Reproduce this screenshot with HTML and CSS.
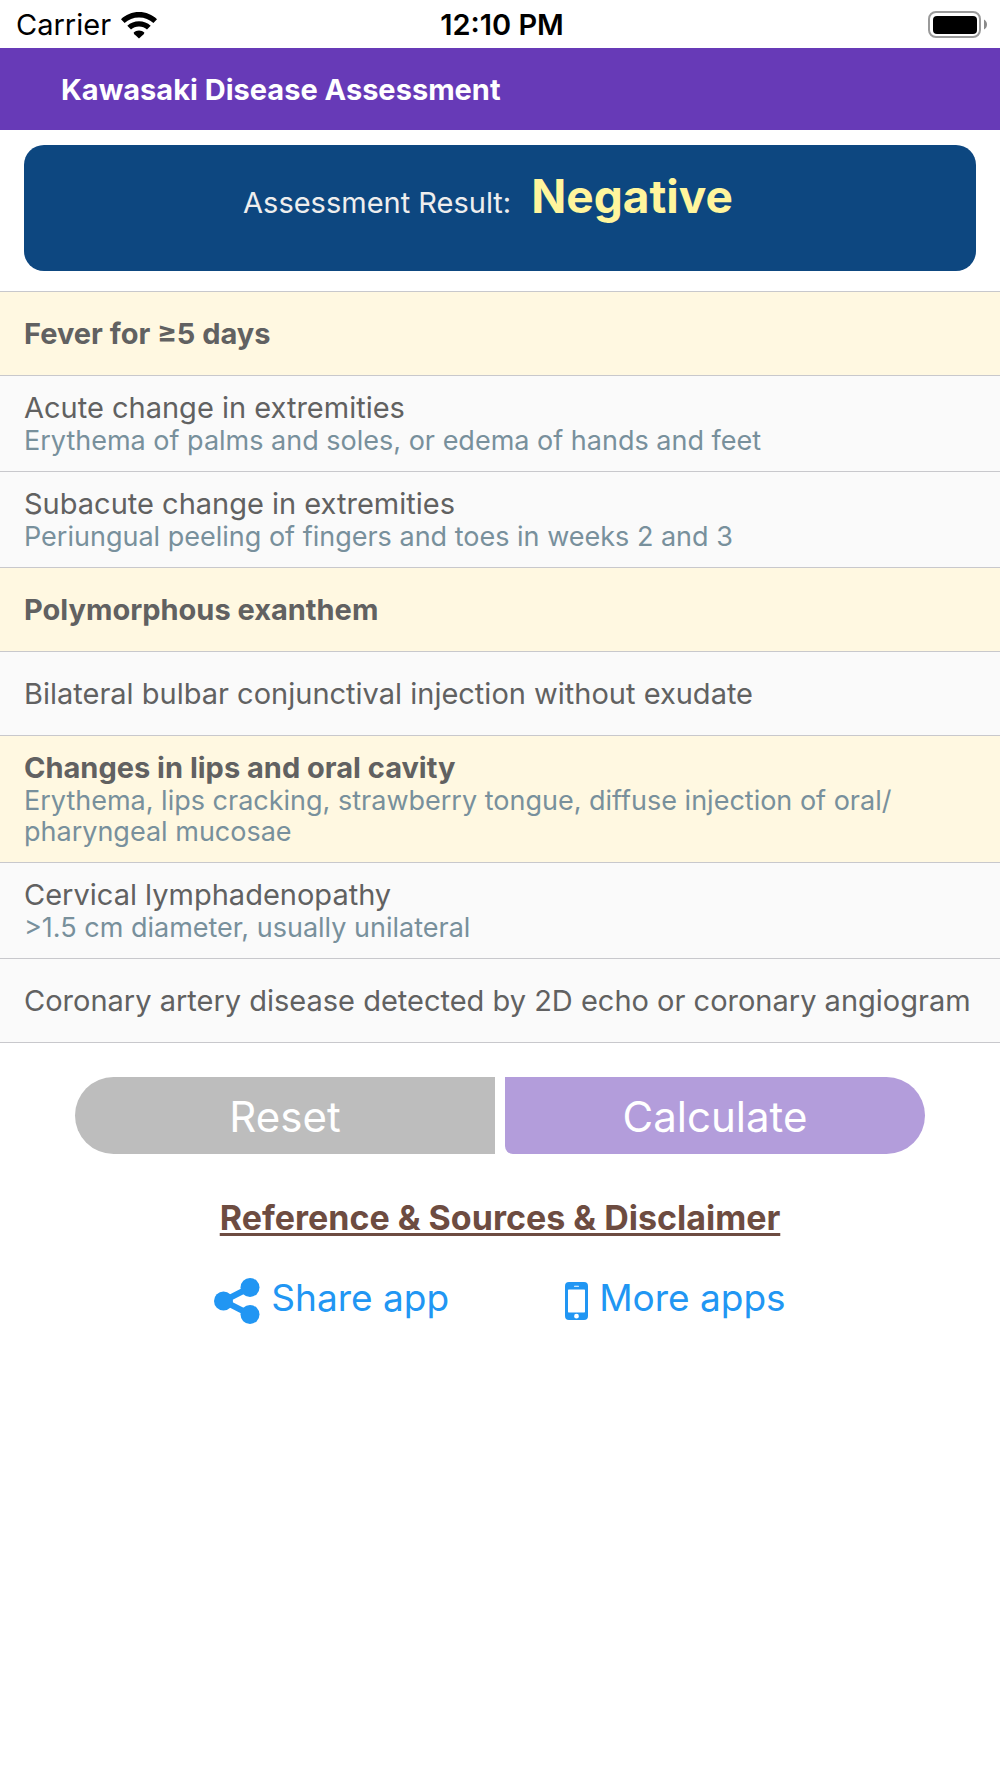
FILE: index.html
```html
<!DOCTYPE html>
<html lang="en">
<head>
<meta charset="utf-8">
<meta name="viewport" content="width=device-width, initial-scale=1">
<title>Kawasaki Disease Assessment</title>
<link rel="stylesheet" href="styles.css">
</head>
<body>
<div class="status-bar">
  <div class="carrier">
    <span>Carrier</span>
    <svg class="wifi" viewBox="0 0 36 27" aria-hidden="true">
      <path d="M18 0C11 0 4.700 2.700 0 7.200L3.600 11C7.400 7.500 12.400 5.500 18 5.500S28.600 7.500 32.400 11L36 7.200C31.300 2.700 25 0 18 0Z"/>
      <path d="M18 9.200C13.500 9.200 9.400 10.900 6.300 13.700L10 17.500C12.100 15.600 14.900 14.500 18 14.500S23.900 15.600 26 17.500L29.700 13.700C26.600 10.900 22.500 9.200 18 9.200Z"/>
      <path d="M18 18.400C15.900 18.400 14 19.200 12.700 20.500Q12.700 21.500 13.400 22.200L18 26.500L22.600 22.200Q23.300 21.500 23.300 20.500C22 19.200 20.100 18.400 18 18.400Z"/>
    </svg>
  </div>
  <time class="clock">12:10 PM</time>
  <svg class="battery" viewBox="0 0 60 28" role="img" aria-label="Battery full">
    <rect x="1" y="1" width="51" height="25" rx="7" fill="none" stroke="#9a9a9a" stroke-width="2"/>
    <rect x="5" y="5" width="44" height="18" rx="4"/>
    <path d="M56 8.500C60 10.500 60 16.500 56 18.500Z" fill="#8a8a8a"/>
  </svg>
</div>
<header class="app-bar"><h1>Kawasaki Disease Assessment</h1></header>
<main>
  <section class="result" aria-live="polite">
    <span class="result-label">Assessment Result:</span>
    <strong class="result-value">Negative</strong>
  </section>
  <ul class="criteria">
    <li><button class="criterion" type="button" aria-pressed="true"><span class="name">Fever for ≥5 days</span></button></li>
    <li><button class="criterion" type="button" aria-pressed="false"><span class="name">Acute change in extremities</span><span class="detail">Erythema of palms and soles, or edema of hands and feet</span></button></li>
    <li><button class="criterion" type="button" aria-pressed="false"><span class="name">Subacute change in extremities</span><span class="detail">Periungual peeling of fingers and toes in weeks 2 and 3</span></button></li>
    <li><button class="criterion" type="button" aria-pressed="true"><span class="name">Polymorphous exanthem</span></button></li>
    <li><button class="criterion" type="button" aria-pressed="false"><span class="name">Bilateral bulbar conjunctival injection without exudate</span></button></li>
    <li><button class="criterion" type="button" aria-pressed="true"><span class="name">Changes in lips and oral cavity</span><span class="detail">Erythema, lips cracking, strawberry tongue, diffuse injection of oral/<wbr>pharyngeal mucosae</span></button></li>
    <li><button class="criterion" type="button" aria-pressed="false"><span class="name">Cervical lymphadenopathy</span><span class="detail">&gt;1.5 cm diameter, usually unilateral</span></button></li>
    <li><button class="criterion" type="button" aria-pressed="false"><span class="name">Coronary artery disease detected by 2D echo or coronary angiogram</span></button></li>
  </ul>
  <div class="actions">
    <button class="action reset" type="button">Reset</button>
    <button class="action calculate" type="button">Calculate</button>
  </div>
  <a class="reference" href="#reference">Reference &amp; Sources &amp; Disclaimer</a>
  <nav class="app-links">
    <a href="#share">
      <svg class="share-icon" viewBox="0 0 46 46" aria-hidden="true">
        <path d="M36 9.500L9.500 23L36 36.500" fill="none" stroke="currentColor" stroke-width="6"/>
        <circle cx="9.500" cy="23" r="9.500"/><circle cx="36" cy="9.500" r="9.500"/><circle cx="36" cy="36.500" r="9.500"/>
      </svg>
      <span>Share app</span>
    </a>
    <a href="#more">
      <svg class="phone-icon" viewBox="0 0 23 38" aria-hidden="true">
        <path fill-rule="evenodd" d="M4 0H19Q23 0 23 4V34Q23 38 19 38H4Q0 38 0 34V4Q0 0 4 0ZM3.700 7.500Q3 7.500 3 8.200V29.800Q3 30.500 3.700 30.500H19.300Q20 30.500 20 29.800V8.200Q20 7.500 19.300 7.500ZM9.500 3.700Q9 3.700 9 4.200T9.500 4.700H13.500Q14 4.700 14 4.200T13.500 3.700ZM11.500 31.800A2.400 2.400 0 1 0 11.500 36.600A2.400 2.400 0 1 0 11.500 31.800Z"/>
      </svg>
      <span>More apps</span>
    </a>
  </nav>
</main>
</body>
</html>
```
FILE: styles.css
```css
* {
  box-sizing: border-box;
}

body {
  margin: 0;
  background: #fff;
  color: #616161;
  font-family: Inter, "Liberation Sans", sans-serif;
  font-size: 29px;
  line-height: 34px;
}

button {
  border: 0;
  font: inherit;
  cursor: pointer;
}

.status-bar {
  display: grid;
  grid-template-columns: 1fr auto 1fr;
  align-items: center;
  height: 48px;
  padding: 2px 12px 0 16px;
  color: #000;
}

.carrier {
  display: flex;
  align-items: center;
  gap: 10px;
}

.wifi {
  width: 36px;
  height: 27px;
}

.clock {
  font-weight: 600;
}

.battery {
  width: 60px;
  height: 28px;
  justify-self: end;
}

.app-bar {
  padding: 25px 61px 23px;
  background: #673ab7;
  color: #fff;
}

h1 {
  margin: 0;
  font-size: 29px;
  font-weight: 700;
  line-height: 34px;
}

.result {
  display: flex;
  align-items: baseline;
  justify-content: center;
  gap: 20px;
  margin: 15px 24px 20px;
  padding: 22px 24px 46px 0;
  border-radius: 20px;
  background: #0d4780;
  color: #eee;
}

.result-value {
  color: #fff59d;
  font-size: 46px;
  font-weight: 700;
  line-height: 58px;
}

.criteria {
  margin: 0;
  padding: 0;
  border-top: 1px solid #c8c8cc;
  list-style: none;
}

.criterion {
  display: flex;
  flex-direction: column;
  justify-content: center;
  width: 100%;
  min-height: 84px;
  padding: 15px 24px;
  border-bottom: 1px solid #c8c8cc;
  background: #fafafa;
  color: #616161;
  text-align: left;
}

.criterion[aria-pressed="true"] {
  background: #fff8e1;
}

.criterion[aria-pressed="true"] .name {
  font-weight: 700;
}

.detail {
  color: #78909c;
  font-size: 27px;
  line-height: 31px;
}

.actions {
  display: grid;
  grid-template-columns: 1fr 1fr;
  gap: 10px;
  margin: 34px 75px 0;
}

.action {
  padding: 16px 0 13px;
  color: #fff;
  font-size: 42px;
  line-height: 48px;
}

.reset {
  border-radius: 39px 0 0 39px;
  background: #bdbdbd;
}

.calculate {
  border-radius: 0 39px 39px 8px;
  background: #b39ddb;
}

.reference {
  display: block;
  width: fit-content;
  margin: 44px auto 0;
  color: #6d4c41;
  font-size: 34px;
  font-weight: 700;
  line-height: 40px;
  text-underline-offset: 3px;
  text-decoration-thickness: 3px;
  text-decoration-skip-ink: none;
}

.app-links {
  display: flex;
  justify-content: center;
  gap: 116px;
  margin-top: 34px;
}

.app-links a {
  display: flex;
  align-items: center;
  gap: 11px;
  color: #2196f3;
  font-size: 37px;
  line-height: 46px;
  text-decoration: none;
}

.app-links svg {
  margin-top: 6px;
  fill: currentColor;
}

.share-icon {
  width: 46px;
  height: 46px;
}

.phone-icon {
  width: 23px;
  height: 38px;
}
```
